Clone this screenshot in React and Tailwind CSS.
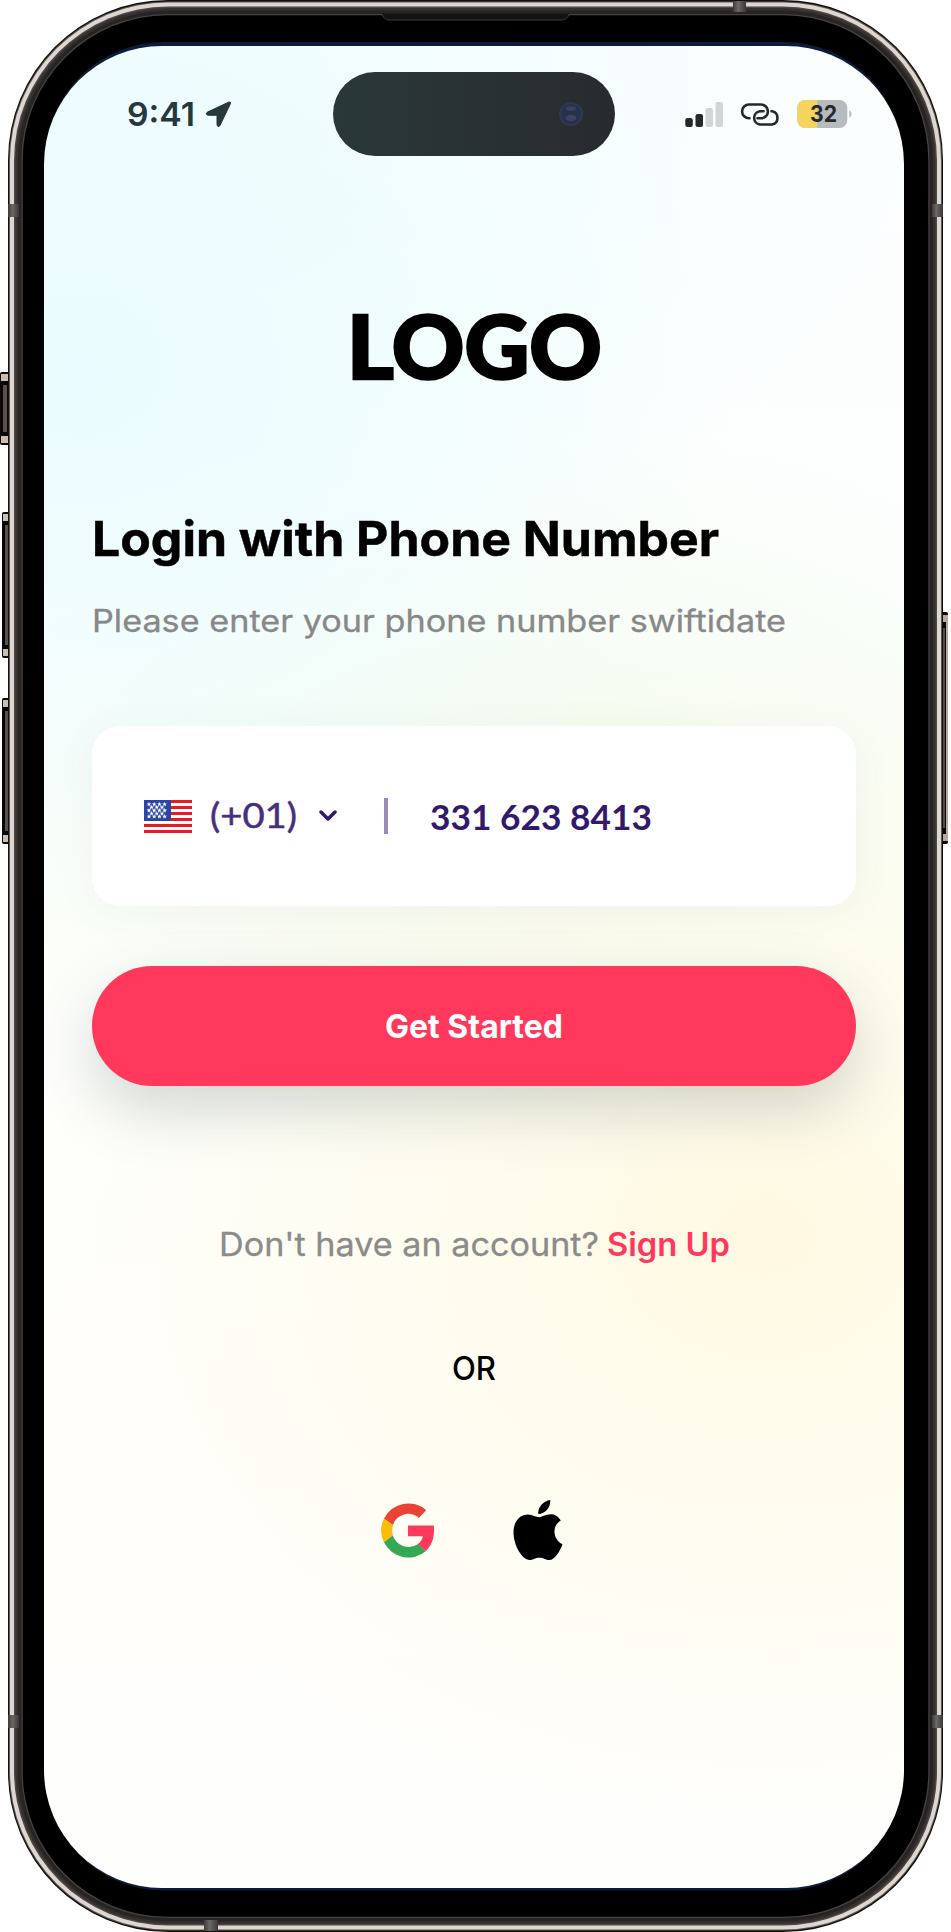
import React from "react";

const SCREEN_BG =
  "radial-gradient(ellipse 640px 560px at 40px 330px, rgba(234,252,255,1), rgba(236,252,255,0.6) 50%, rgba(240,253,255,0)), radial-gradient(ellipse 900px 520px at 0px 60px, rgba(238,253,255,0.9), rgba(240,253,255,0)), radial-gradient(ellipse 720px 600px at 720px 1190px, rgba(255,249,226,1), rgba(255,251,232,0.6) 45%, rgba(255,253,243,0)), radial-gradient(ellipse 680px 360px at 480px 740px, rgba(242,250,236,0.85), rgba(244,251,238,0)), linear-gradient(to bottom, #fcfeff 0%, #fdfffd 40%, #fffefa 75%, #fefefd 100%)";

function Frame() {
  return (
    <svg className="absolute inset-0" width="951" height="1932" viewBox="0 0 951 1932" fill="none">
      <defs>
        <linearGradient id="antenna" x1="0" x2="1" y1="0" y2="0">
          <stop offset="0" stopColor="#3c3b3a" />
          <stop offset="0.4" stopColor="#6b6967" />
          <stop offset="1" stopColor="#3a3837" />
        </linearGradient>
      </defs>
      <g>
        {[[0, 372, 73], [2, 512, 146], [2, 698, 146]].map(([x, y, h]) => (
          <g key={y}>
            <rect x={x} y={y} width="12" height={h} rx="2" fill="#0c0908" />
            <rect x={x + 1} y={y + 2} width="7" height={h - 4} fill="#c9bdb4" />
            <rect x={x + 1} y={y + 9} width="7" height={h - 18} fill="#090706" />
            <rect x={x + 3} y={y + 13} width="4" height={h - 26} fill="#57514d" />
          </g>
        ))}
        <rect x="936" y="612" width="12" height="232" rx="2" fill="#0c0908" />
        <rect x="942" y="615" width="6" height="226" fill="#b5a9a0" />
        <rect x="942" y="622" width="4" height="212" fill="#090706" />
        <rect x="943" y="628" width="2" height="200" fill="#504b48" />
      </g>
      <rect x="8" y="0" width="935" height="1932" rx="160" fill="#12100f" />
      <rect x="9" y="1.5" width="933" height="1929" rx="159" fill="#5c5652" />
      <rect x="10" y="2.5" width="931" height="1927" rx="158" fill="#ded7cf" />
      <rect x="14" y="6.5" width="923" height="1919" rx="154" fill="#4d4845" />
      <rect x="15.5" y="8" width="920" height="1916" rx="152.500" fill="#35312f" />
      <rect x="18" y="10.500" width="915" height="1911" rx="150" fill="#272423" />
      <rect x="21.500" y="14" width="908" height="1904" rx="146" fill="#454342" />
      <rect x="22.700" y="15.200" width="905.600" height="1901.600" rx="145" fill="#000" />
      <g fill="url(#antenna)">
        <rect x="8" y="204" width="11" height="13" />
        <rect x="932" y="204" width="11" height="13" />
        <rect x="8" y="1715" width="11" height="13" />
        <rect x="932" y="1715" width="11" height="13" />
        <rect x="733" y="1" width="13" height="11" />
        <rect x="204" y="1920" width="14" height="11" />
      </g>
      <path d="M382 13.500Q384 20 389 20H562Q567 20 569 13.500Z" fill="#141312" />
      <path d="M382 14.500Q384 20 389 20H562Q567 20 569 14.500" stroke="#3d3c3b" />
      <rect x="45" y="42" width="858" height="1848.500" rx="119" fill="#0c1c3b" />
    </svg>
  );
}

function Flag() {
  const stars = [];
  for (let r = 0; r < 5; r++)
    for (let c = 0; c < (r % 2 ? 3 : 4); c++)
      stars.push([4 + c * 5.2 + (r % 2 ? 2.6 : 0), 4.300 + r * 3.050]);
  return (
    <svg width="48" height="33" viewBox="0 0 48 33">
      <rect width="48" height="33" fill="#fff" />
      {[0, 1, 2, 3, 4, 5].map((i) => (
        <rect key={i} y={i * 6} width="48" height="3" fill="#e71d1d" />
      ))}
      <rect width="27" height="21" fill="#2c45a5" />
      {stars.map(([x, y], i) => (
        <path
          key={i}
          transform={`translate(${x + 1} ${y})`}
          fill="#fff"
          d="M0-2.500L.6-.8 2.400-.8 1 .3 1.500 2 0 1-1.500 2-1 .3-2.400-.8-.6-.8Z"
        />
      ))}
    </svg>
  );
}

function Google() {
  return (
    <svg width="54" height="55" viewBox="0 0 54 55">
      <path d="M3 15.700A27 27 0 0 1 45.200 7.200L38 14.700A16.500 16.500 0 0 0 11.800 22Z" fill="#ea4335" />
      <path d="M3 15.500A27 27 0 0 0 3 39.300L12 32.600A17 17 0 0 1 12 22Z" fill="#fbbc05" />
      <path d="M3 39.200A27 27 0 0 0 45 48L36.600 41.200A16.500 16.500 0 0 1 11.800 32.500Z" fill="#34a853" />
      <path d="M27 22.500H52.800C53.700 31 52.500 40.500 45 48L36.500 41.200C39.500 39.300 41.200 36.700 41.800 33.200H27Z" fill="#ff385c" />
    </svg>
  );
}

function Apple() {
  return (
    <svg width="50" height="60" viewBox="0 0 49 60">
      <path
        d="M36.800 0C37.200 7 32 14 24.800 14C24 7.300 30.200.7 36.800 0ZM47.300 20.500C37.800 26 39.500 39.800 49 44.200C46.500 51 41.500 60 35.700 60C32 60 30.700 57.700 26 57.700C21.300 57.700 19.700 60 16.100 60C8.500 60 0 45 0 32.500C0 20.500 7.200 14.500 14.400 14.500C19 14.500 22.500 17.300 25.300 17.300C28 17.300 32 14.200 37.500 14.200C40.500 14.200 44.700 16 47.300 20.500Z"
        fill="#000"
      />
    </svg>
  );
}

function StatusBar() {
  return (
    <div className="flex h-[84px] items-center text-[#26383b]">
      <div className="flex w-[289px] items-center pl-[80px]">
        <svg width="110" height="38" viewBox="0 0 110 38" className="overflow-visible">
          <text x="3" y="31" textLength="68" lengthAdjust="spacingAndGlyphs" fontFamily="Inter, sans-serif" fontSize="33" fontWeight="600" fill="#26383b">9:41</text>
          <path transform="translate(4 1)" d="M102.500 7.500L92 29.500C91.200 31.200 89 30.600 89 28.700V19.300H80.300C78.200 19.300 77.700 17 79.500 16.100L100.300 6.300C102 5.600 103.200 6.200 102.500 7.500Z" fill="#26383b" stroke="#26383b" strokeLinejoin="round" />
        </svg>
      </div>
      <div className="flex h-[84px] w-[282px] items-center justify-end rounded-full bg-linear-to-r from-[#2a3839] to-[#282b2d] pr-[32px]">
        <svg width="24" height="24" viewBox="0 0 24 24">
          <circle cx="12" cy="12" r="11" fill="#29304b" stroke="#2e3850" strokeWidth="2" />
          <ellipse cx="12" cy="6.500" rx="5" ry="2.200" fill="#3b4160" />
          <ellipse cx="12" cy="16" rx="5.500" ry="3.200" fill="#3b4160" />
        </svg>
      </div>
      <div className="flex items-center pt-[2px] pl-[70px]">
        <svg width="170" height="30" viewBox="0 0 170 30">
          <rect x="0.300" y="18" width="7.500" height="9" rx="2.200" fill="#24292c" />
          <rect x="10.500" y="14" width="7.500" height="13" rx="2.200" fill="#24292c" />
          <rect x="20.500" y="8" width="7.500" height="19" rx="2.200" fill="#d0d5d6" />
          <rect x="30.500" y="2" width="7.500" height="25" rx="2.200" fill="#d0d5d6" />
          <g transform="translate(1 0)" fill="none" stroke="#24292c" strokeWidth="2.600" strokeLinecap="round">
            <path d="M63.500 18.300H63A6.900 6.900 0 0 1 63 4.500H75A6.900 6.900 0 0 1 75 18.300H71.500" />
            <path d="M85.500 11.300H86.300A6.800 6.800 0 0 1 86.300 24.500H73.700A6.700 6.700 0 0 1 73.700 11.300H77.500" />
          </g>
          <rect x="112.300" y="0" width="50" height="28" rx="8" fill="#b7bbbd" />
          <path d="M132.300 0H120.300A8 8 0 0 0 112.300 8V20A8 8 0 0 0 120.300 28H132.300Z" fill="#f5d35f" />
          <path d="M164.300 10Q169 14 164.300 18Z" fill="#b7bbbd" />
          <text x="125" y="22" textLength="27" lengthAdjust="spacingAndGlyphs" fontFamily="Inter, sans-serif" fontSize="22.500" fontWeight="700" fill="#24292c">32</text>
        </svg>
      </div>
    </div>
  );
}

// Single line of text stretched to an exact advance width.
function Line({ w, h, y, size, weight, fill, stroke = 0, family = "Inter, sans-serif", children }) {
  return (
    <svg width={w} height={h} className="block overflow-visible">
      <text x={0} y={y} textLength={w} lengthAdjust="spacingAndGlyphs" fontFamily={family} fontSize={size} fontWeight={weight} fill={fill} stroke={fill} strokeWidth={stroke}>
        {children}
      </text>
    </svg>
  );
}

export default function App() {
  return (
    <div className="relative h-[1932px] w-[951px] overflow-hidden bg-white font-['Inter',sans-serif]">
      <Frame />
      <div className="relative px-[44px] pt-[46px]">
        <main className="h-[1842px] w-[860px] overflow-hidden rounded-[118px] pt-[26px]" style={{ background: SCREEN_BG }}>
          <StatusBar />
          <div className="px-[48px]">
            <h1 className="flex justify-center pt-[153px]">
              <Line w={255} h={80} y={70} size={87} weight={900} fill="#000" stroke={2.5} family="Lato, sans-serif">LOGO</Line>
            </h1>
            <h2 className="pt-[122px]">
              <Line w={627} h={60} y={45} size={48} weight={700} fill="#000" stroke={0.5}>Login with Phone Number</Line>
            </h2>
            <p className="pt-[36px]">
              <Line w={694} h={40} y={25} size={31} weight={400} fill="#888" stroke={0.3}>Please enter your phone number swiftidate</Line>
            </p>
            <div className="mt-[79px] flex h-[180px] items-center rounded-[28px] bg-white pl-[52px] shadow-[0_6px_40px_rgba(90,108,100,0.06)]">
              <Flag />
              <div className="pt-[4px] pl-[18px]">
                <Line w={87} h={40} y={30} size={34} weight={400} fill="#472f7d" stroke={0.5} family="Lato, sans-serif">(+01)</Line>
              </div>
              <svg className="ml-[22px]" width="18" height="12" viewBox="0 0 18 12">
                <path d="M2 2L9 9L16 2" fill="none" stroke="#33196b" strokeWidth="3.500" strokeLinecap="round" strokeLinejoin="round" />
              </svg>
              <div className="ml-[47px] h-9 w-[4px] bg-[#998cb7]" />
              <div className="pt-[3px] pl-[42px]">
                <Line w={222} h={40} y={32} size={35} weight={700} fill="#33196b" family="Lato, sans-serif">331 623 8413</Line>
              </div>
            </div>
            <button className="mt-[60px] flex h-[120px] w-full items-center justify-center rounded-full bg-[#ff385c] shadow-[0_24px_60px_rgba(60,80,80,0.22)]">
              <Line w={178} h={40} y={32} size={33} weight={700} fill="#fff">Get Started</Line>
            </button>
            <div className="flex justify-center gap-[8px] pt-[140px]">
              <Line w={380} h={40} y={30} size={32} weight={400} fill="#8b8b89" stroke={0.3}>Don't have an account?</Line>
              <Line w={123} h={40} y={30} size={32} weight={600} fill="#ff385c">Sign Up</Line>
            </div>
            <div className="flex justify-center pt-[84px]">
              <Line w={44} h={40} y={30} size={32} weight={500} fill="#000">OR</Line>
            </div>
            <div className="flex items-center justify-center gap-[78px] pt-[110px] pr-[5px]">
              <Google />
              <Apple />
            </div>
          </div>
        </main>
      </div>
    </div>
  );
}
